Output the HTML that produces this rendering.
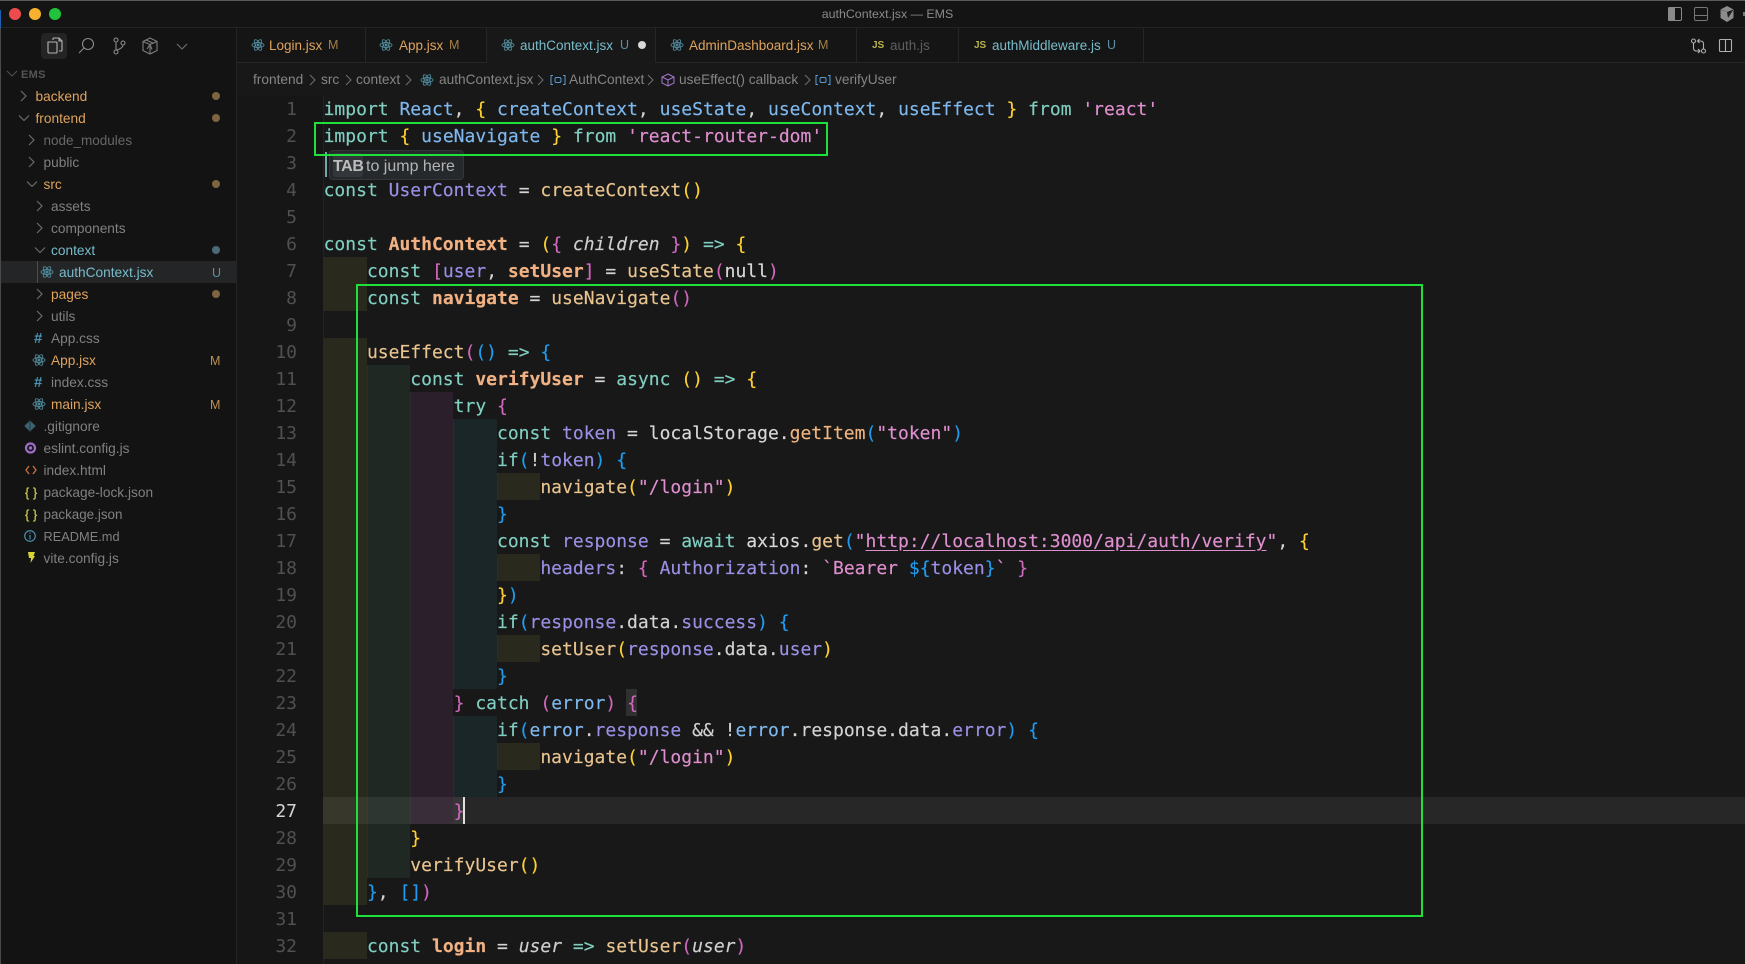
<!DOCTYPE html>
<html><head><meta charset="utf-8"><title>authContext.jsx — EMS</title>
<style>
*{box-sizing:border-box}
html,body{margin:0;padding:0;width:1745px;height:964px;overflow:hidden;background:#181818}
body{position:relative;font-family:"Liberation Sans",sans-serif;font-size:13.7px}
.a{position:absolute}
#title{left:0;top:0;width:1745px;height:28px;background:#141414;border-bottom:1px solid #242424;border-top:1px solid #5a5a5a}
#tt{left:0;width:1775px;top:6px;text-align:center;color:#8a8a8a;font-size:12.4px;line-height:17px}
.tl{width:12px;height:12px;border-radius:50%;top:8px}
#side{left:0;top:28px;width:237px;height:936px;background:#131313;border-right:1px solid #242424;border-left:1px solid #4a4a4a}
#tabs{left:237px;top:28px;width:1508px;height:35px;background:#151515;border-bottom:1px solid #262626}
.tab{position:absolute;top:0;height:34px;border-right:1px solid #262626;line-height:35px;white-space:nowrap;font-size:13.5px}
.tab svg,.tab b{position:absolute}
.tab span{position:absolute;top:0}
.or{color:#dfa35e}.te{color:#78bccb}.gr{color:#5e5e5e}
.bad{font-size:12.5px}
.row{position:absolute;left:1px;width:235px;height:22px;line-height:22px;color:#808080;white-space:nowrap}
.row span{position:absolute;top:1px}
.dot{position:absolute;left:211px;top:7px;width:8px;height:8px;border-radius:50%;background:#80633f}
.st{position:absolute;left:209px;font-size:12.5px;color:#c08f4f}
.chev{position:absolute;top:0}
#crumb{left:237px;top:63px;height:33px;width:1200px;color:#858585;line-height:33px;font-size:13.7px;white-space:nowrap}
#crumb span,#crumb svg{position:absolute}
#crumb span{top:0}
#gut{left:237px;top:63px;width:86px;height:901px;background:#161616}
.ln{position:absolute;left:237px;width:60px;height:27px;margin-top:1px;text-align:right;font:18px/27px "DejaVu Sans Mono",monospace;color:#505050}
.cd{position:absolute;left:323.6px;height:27px;margin-top:1px;white-space:pre;font:18px/27px "DejaVu Sans Mono",monospace;color:#d4d4d4;-webkit-text-stroke:.15px currentColor}
.ind{position:absolute;height:27px;width:43.34px}
.l1{background:#2a291d}.l2{background:#1f2822}.l3{background:#2a1f2a}.l4{background:#1b2628}
.k{color:#80cfc2}.b{color:#7fb8ee}.y{color:#ffd02f}.s{color:#df8fcf}.p{color:#9a90e6}.f{color:#e9c48f}.o{color:#f1b183;font-weight:bold}.m{color:#cf67bd}.u{color:#1f9cf0}.w{color:#d4d4d4}.i{font-style:italic;color:#cfcfcf}.g{color:#f0b57f}
.n{color:#d8d8d8}
.gbox{position:absolute;border:2.6px solid #1fe03a;background:transparent}
</style></head><body>

<div class="a" id="title"></div>
<div class="a" style="left:0;top:10px;width:1px;height:18px;background:#1a5fb4"></div>
<div class="a" id="tt">authContext.jsx — EMS</div>
<div class="a tl" style="left:9px;background:#ee4c4c"></div>
<div class="a tl" style="left:29px;background:#f6b22f"></div>
<div class="a tl" style="left:49px;background:#1fc43c"></div>

<svg class="a" style="left:1660px;top:0" width="85" height="28" viewBox="0 0 85 28">
<rect x="8.5" y="7.5" width="13" height="13" rx="1.5" fill="none" stroke="#8a8a8a"/><rect x="8" y="7" width="7" height="14" rx="1.5" fill="#8a8a8a"/>
<rect x="34.5" y="7.5" width="13" height="13" rx="1.5" fill="none" stroke="#777"/><line x1="34.5" y1="15.5" x2="47.5" y2="15.5" stroke="#777"/>
<path d="M67 6 L73.5 9.5 V18 L67 22 L60.5 18 V9.5 Z" fill="#8c8c8c"/><path d="M60.5 9.5 L67 12 L73.5 9.5 L68 18 Z" fill="#1c1c1c"/><path d="M67 12 L68 18 L67 21 L61 17.5 V10 Z" fill="#8c8c8c"/>
<rect x="83" y="12" width="2" height="4" fill="#777"/>
</svg>

<div class="a" id="side"></div>
<div class="a" style="left:41px;top:33px;width:26px;height:26px;border-radius:4px;background:#242424"></div>
<svg class="a" style="left:41px;top:33px" width="160" height="26" viewBox="0 0 160 26" fill="none" stroke="#9a9a9a" stroke-width="1.1">
<path d="M12 7 V6 q0-1 1-1 h5 l3 3 v9 q0 1-1 1 h-2" stroke="#b5b5b5"/><path d="M18 5 v3 h3" stroke="#b5b5b5"/><path d="M7 9 h8 q1 0 1 1 v9 q0 1-1 1 H8 q-1 0-1-1 Z" stroke="#b5b5b5"/>
<circle cx="47" cy="11" r="5.5" stroke="#8c8c8c"/><line x1="43" y1="15" x2="38" y2="20" stroke="#8c8c8c"/>
<circle cx="75" cy="7" r="2" stroke="#8c8c8c"/><circle cx="75" cy="19" r="2" stroke="#8c8c8c"/><circle cx="82" cy="10" r="2" stroke="#8c8c8c"/><path d="M75 9 V17 M82 12 q0 3-6 5" stroke="#8c8c8c"/>
<path d="M109 5 l7 3.5 v9 l-7 3.5 l-7-3.5 v-9 Z M102 8.5 l7 3 l7-3 M109 11.5 v9 M105 7 l7 3 M106 16 l3-4.500 l2 5" stroke="#7d7d7d"/>
<path d="M136 11 l5 5 l5-5" stroke="#707070"/>
</svg>
<svg class="a" style="left:5px;top:68px" width="14" height="12" fill="none" stroke="#4f4f4f" stroke-width="1.1"><path d="M2 3 l5 5 l5-5"/></svg>
<div class="a" style="left:21px;top:68px;font-size:11px;font-weight:bold;color:#555;line-height:14px;letter-spacing:.3px">EMS</div>

<div id="tree">
<div class="row" style="top:85px"><svg class="chev" style="left:17px" width="12" height="22" fill="none" stroke="#6f6f6f" stroke-width="1.1"><path d="M3 6 l5 5 l-5 5"/></svg><span class="or" style="left:34.500px">backend</span><i class="dot"></i></div>
<div class="row" style="top:107px"><svg class="chev" style="left:17px" width="12" height="22" fill="none" stroke="#6f6f6f" stroke-width="1.1"><path d="M1 8.500 l5 5 l5-5"/></svg><span class="or" style="left:34.500px">frontend</span><i class="dot"></i></div>
<div class="row" style="top:129px"><svg class="chev" style="left:25px" width="12" height="22" fill="none" stroke="#6f6f6f" stroke-width="1.1"><path d="M3 6 l5 5 l-5 5"/></svg><span style="left:42.500px;color:#666;font-size:13.5px">node_modules</span></div>
<div class="row" style="top:151px"><svg class="chev" style="left:25px" width="12" height="22" fill="none" stroke="#6f6f6f" stroke-width="1.1"><path d="M3 6 l5 5 l-5 5"/></svg><span style="left:42.500px">public</span></div>
<div class="row" style="top:173px"><svg class="chev" style="left:25px" width="12" height="22" fill="none" stroke="#6f6f6f" stroke-width="1.1"><path d="M1 8.500 l5 5 l5-5"/></svg><span class="or" style="left:42.500px">src</span><i class="dot"></i></div>
<div class="row" style="top:195px"><svg class="chev" style="left:33px" width="12" height="22" fill="none" stroke="#6f6f6f" stroke-width="1.1"><path d="M3 6 l5 5 l-5 5"/></svg><span style="left:50px">assets</span></div>
<div class="row" style="top:217px"><svg class="chev" style="left:33px" width="12" height="22" fill="none" stroke="#6f6f6f" stroke-width="1.1"><path d="M3 6 l5 5 l-5 5"/></svg><span style="left:50px">components</span></div>
<div class="row" style="top:239px"><svg class="chev" style="left:33px" width="12" height="22" fill="none" stroke="#6f6f6f" stroke-width="1.1"><path d="M1 8.500 l5 5 l5-5"/></svg><span class="te" style="left:50px">context</span><i class="dot" style="background:#4a6a78"></i></div>
<div class="row" style="top:261px;background:#242526"><div class="a" style="left:36px;top:0;width:1px;height:22px;background:#4d4d4d"></div><svg class="a" style="left:39px;top:4px" width="14" height="14" viewBox="0 0 14 14" fill="none" stroke="#4f8798" stroke-width=".9"><ellipse cx="7" cy="7" rx="6" ry="2.500"/><ellipse cx="7" cy="7" rx="6" ry="2.500" transform="rotate(60 7 7)"/><ellipse cx="7" cy="7" rx="6" ry="2.500" transform="rotate(120 7 7)"/><circle cx="7" cy="7" r="1" fill="#4f8798"/></svg><span class="te" style="left:58px">authContext.jsx</span><span class="st" style="left:211px;color:#5d8fa3">U</span></div>
<div class="row" style="top:283px"><svg class="chev" style="left:33px" width="12" height="22" fill="none" stroke="#6f6f6f" stroke-width="1.1"><path d="M3 6 l5 5 l-5 5"/></svg><span class="or" style="left:50px">pages</span><i class="dot"></i></div>
<div class="row" style="top:305px"><svg class="chev" style="left:33px" width="12" height="22" fill="none" stroke="#6f6f6f" stroke-width="1.1"><path d="M3 6 l5 5 l-5 5"/></svg><span style="left:50px">utils</span></div>
<div class="row" style="top:327px"><span style="left:33px;color:#4a93b5;font-weight:bold;font-size:15px">#</span><span style="left:50px">App.css</span></div>
<div class="row" style="top:349px"><svg class="a" style="left:31px;top:4px" width="14" height="14" viewBox="0 0 14 14" fill="none" stroke="#4f8798" stroke-width=".9"><ellipse cx="7" cy="7" rx="6" ry="2.500"/><ellipse cx="7" cy="7" rx="6" ry="2.500" transform="rotate(60 7 7)"/><ellipse cx="7" cy="7" rx="6" ry="2.500" transform="rotate(120 7 7)"/><circle cx="7" cy="7" r="1" fill="#4f8798"/></svg><span class="or" style="left:50px">App.jsx</span><span class="st">M</span></div>
<div class="row" style="top:371px"><span style="left:33px;color:#4a93b5;font-weight:bold;font-size:15px">#</span><span style="left:50px">index.css</span></div>
<div class="row" style="top:393px"><svg class="a" style="left:31px;top:4px" width="14" height="14" viewBox="0 0 14 14" fill="none" stroke="#4f8798" stroke-width=".9"><ellipse cx="7" cy="7" rx="6" ry="2.500"/><ellipse cx="7" cy="7" rx="6" ry="2.500" transform="rotate(60 7 7)"/><ellipse cx="7" cy="7" rx="6" ry="2.500" transform="rotate(120 7 7)"/><circle cx="7" cy="7" r="1" fill="#4f8798"/></svg><span class="or" style="left:50px">main.jsx</span><span class="st">M</span></div>
<div class="row" style="top:415px"><svg class="a" style="left:23px;top:5px" width="12" height="12" viewBox="0 0 12 12"><rect x="2" y="2" width="8" height="8" transform="rotate(45 6 6)" fill="#3d6272"/><path d="M6 1 V11" stroke="#1f3a47"/></svg><span style="left:42.500px">.gitignore</span></div>
<div class="row" style="top:437px"><svg class="a" style="left:23px;top:4px" width="13" height="14" viewBox="0 0 13 14" fill="none"><circle cx="6.500" cy="7" r="4.500" stroke="#9a6dc8" stroke-width="2.200"/><circle cx="6.500" cy="7" r="1.700" fill="#9a6dc8"/></svg><span style="left:42.500px">eslint.config.js</span></div>
<div class="row" style="top:459px"><svg class="a" style="left:24px;top:6px" width="12" height="10" fill="none" stroke="#c9703a" stroke-width="1.300"><path d="M4 1 L1 5 L4 9 M8 1 L11 5 L8 9"/></svg><span style="left:42.500px">index.html</span></div>
<div class="row" style="top:481px"><span style="left:24px;color:#c7c24e;font-size:12.5px;letter-spacing:.2px;-webkit-text-stroke:.3px #c7c24e">{ }</span><span style="left:42.500px">package-lock.json</span></div>
<div class="row" style="top:503px"><span style="left:24px;color:#c7c24e;font-size:12.5px;letter-spacing:.2px;-webkit-text-stroke:.3px #c7c24e">{ }</span><span style="left:42.500px;font-size:13.4px">package.json</span></div>
<div class="row" style="top:525px"><svg class="a" style="left:23px;top:5px" width="12" height="12" fill="none" stroke="#4c96b8" stroke-width="1.100"><circle cx="6" cy="6" r="5.300"/><path d="M6 5 V9.500 M6 2.500 V3.800"/></svg><span style="left:42.500px;font-size:12.8px">README.md</span></div>
<div class="row" style="top:547px"><svg class="a" style="left:26px;top:4px" width="9" height="13" viewBox="0 0 9 13"><path d="M1 1 H8 L6.500 5 H8 L3.500 12 L4 7 H2 Z" fill="#d9d336"/></svg><span style="left:42.500px">vite.config.js</span></div>
</div>

<div class="a" id="tabs">
<div class="tab" style="left:0;width:129px"><svg style="left:14px;top:10px" width="14" height="14" viewBox="0 0 14 14" fill="none" stroke="#4f8798" stroke-width=".9"><ellipse cx="7" cy="7" rx="6" ry="2.500"/><ellipse cx="7" cy="7" rx="6" ry="2.500" transform="rotate(60 7 7)"/><ellipse cx="7" cy="7" rx="6" ry="2.500" transform="rotate(120 7 7)"/><circle cx="7" cy="7" r="1" fill="#4f8798"/></svg><span class="or" style="left:32px">Login.jsx</span><span class="or bad" style="left:91px;color:#a67f47">M</span></div>
<div class="tab" style="left:129px;width:121px"><svg style="left:13px;top:10px" width="14" height="14" viewBox="0 0 14 14" fill="none" stroke="#4f8798" stroke-width=".9"><ellipse cx="7" cy="7" rx="6" ry="2.500"/><ellipse cx="7" cy="7" rx="6" ry="2.500" transform="rotate(60 7 7)"/><ellipse cx="7" cy="7" rx="6" ry="2.500" transform="rotate(120 7 7)"/><circle cx="7" cy="7" r="1" fill="#4f8798"/></svg><span class="or" style="left:33px">App.jsx</span><span class="or bad" style="left:83px;color:#a67f47">M</span></div>
<div class="tab" style="left:250px;width:169px;height:35px;background:#181818"><svg style="left:14px;top:10px" width="14" height="14" viewBox="0 0 14 14" fill="none" stroke="#4f8798" stroke-width=".9"><ellipse cx="7" cy="7" rx="6" ry="2.500"/><ellipse cx="7" cy="7" rx="6" ry="2.500" transform="rotate(60 7 7)"/><ellipse cx="7" cy="7" rx="6" ry="2.500" transform="rotate(120 7 7)"/><circle cx="7" cy="7" r="1" fill="#4f8798"/></svg><span class="te" style="left:33px">authContext.jsx</span><span class="bad" style="left:133px;color:#5d8fa3">U</span><b style="left:151px;top:13px;width:8px;height:8px;border-radius:50%;background:#d8d8d8"></b></div>
<div class="tab" style="left:419px;width:201px"><svg style="left:14px;top:10px" width="14" height="14" viewBox="0 0 14 14" fill="none" stroke="#4f8798" stroke-width=".9"><ellipse cx="7" cy="7" rx="6" ry="2.500"/><ellipse cx="7" cy="7" rx="6" ry="2.500" transform="rotate(60 7 7)"/><ellipse cx="7" cy="7" rx="6" ry="2.500" transform="rotate(120 7 7)"/><circle cx="7" cy="7" r="1" fill="#4f8798"/></svg><span class="or" style="left:33px">AdminDashboard.jsx</span><span class="or bad" style="left:162px;color:#a67f47">M</span></div>
<div class="tab" style="left:620px;width:102px"><span style="left:15px;color:#b9b34a;font-size:10px;font-weight:bold">JS</span><span class="gr" style="left:33px">auth.js</span></div>
<div class="tab" style="left:722px;width:185px"><span style="left:15px;color:#b9b34a;font-size:10px;font-weight:bold">JS</span><span class="te" style="left:33px">authMiddleware.js</span><span class="bad" style="left:148px;color:#5d8fa3">U</span></div>
</div>
<svg class="a" style="left:1688px;top:34px" width="50" height="24" fill="none" stroke="#b0b0b0" stroke-width="1.100">
<circle cx="5.500" cy="7" r="2"/><circle cx="15.500" cy="17" r="2"/><path d="M5.500 9 V14 q0 3 3 3 h3 M10 15 l2 2 l-2 2 M15.500 15 V10 q0-3-3-3 h-3 M11.500 5 l-2 2 l2 2"/>
<rect x="31.500" y="5.500" width="12" height="12" rx="1"/><line x1="37.500" y1="5.500" x2="37.500" y2="17.500"/>
</svg>

<div class="a" id="crumb">
<span style="left:16px">frontend</span>
<svg style="left:72px;top:11px" width="8" height="12" fill="none" stroke="#707070"><path d="M1 1 l5 5 l-5 5"/></svg>
<span style="left:84px">src</span>
<svg style="left:108px;top:11px" width="8" height="12" fill="none" stroke="#707070"><path d="M1 1 l5 5 l-5 5"/></svg>
<span style="left:119px">context</span>
<svg style="left:168px;top:11px" width="8" height="12" fill="none" stroke="#707070"><path d="M1 1 l5 5 l-5 5"/></svg>
<svg style="left:183px;top:10px" width="14" height="14" viewBox="0 0 14 14" fill="none" stroke="#4f8798" stroke-width=".9"><ellipse cx="7" cy="7" rx="6" ry="2.500"/><ellipse cx="7" cy="7" rx="6" ry="2.500" transform="rotate(60 7 7)"/><ellipse cx="7" cy="7" rx="6" ry="2.500" transform="rotate(120 7 7)"/><circle cx="7" cy="7" r="1" fill="#4f8798"/></svg>
<span style="left:202px">authContext.jsx</span>
<svg style="left:300px;top:11px" width="8" height="12" fill="none" stroke="#707070"><path d="M1 1 l5 5 l-5 5"/></svg>
<svg style="left:313px;top:11px" width="16" height="12" fill="none" stroke="#5a9bd6"><path d="M3 1.500 H1 V10.500 H3 M13 1.500 H15 V10.500 H13"/><rect x="5" y="3.500" width="6" height="5" rx="1.500"/></svg>
<span style="left:332px">AuthContext</span>
<svg style="left:410px;top:11px" width="8" height="12" fill="none" stroke="#707070"><path d="M1 1 l5 5 l-5 5"/></svg>
<svg style="left:424px;top:10px" width="14" height="14" fill="none" stroke="#a878d0" viewBox="0 0 14 14"><path d="M7 1 L13 4 V10 L7 13 L1 10 V4 Z M1 4 L7 7 L13 4 M7 7 V13"/></svg>
<span style="left:442px">useEffect() callback</span>
<svg style="left:567px;top:11px" width="8" height="12" fill="none" stroke="#707070"><path d="M1 1 l5 5 l-5 5"/></svg>
<svg style="left:578px;top:11px" width="16" height="12" fill="none" stroke="#5a9bd6"><path d="M3 1.500 H1 V10.500 H3 M13 1.500 H15 V10.500 H13"/><rect x="5" y="3.500" width="6" height="5" rx="1.500"/></svg>
<span style="left:598px">verifyUser</span>
</div>

<div class="a" id="gut" style="top:96px;height:868px"></div>
<div class="a" style="left:323px;top:95px;width:1px;height:869px;background:#232323"></div>

<div id="fills"><script>
var L={7:1,8:1,10:1,11:2,12:3,13:4,14:4,15:5,16:4,17:4,18:5,19:4,20:4,21:5,22:4,23:3,24:4,25:5,26:4,27:3,28:2,29:2,30:1,32:1};
var h='',c=['l1','l2','l3','l4','l1'];
for(var k in L){for(var j=0;j<L[k];j++){h+='<div class="ind '+c[j]+'" style="left:'+(323.4+j*43.34)+'px;top:'+(95+(k-1)*27)+'px'+(j>0?';border-left:1px solid #2c2c2c':'')+'"></div>';}}
document.write(h);
var n='';for(var i=1;i<=32;i++){n+='<div class="ln" style="top:'+(95+(i-1)*27)+'px'+(i==27?';color:#d4d4d4':'')+'">'+i+'</div>';}
document.write(n);
</script></div>

<div class="a" style="left:323px;top:797px;width:1422px;height:27px;background:rgba(255,255,255,.065)"></div>
<div class="a" style="left:453px;top:797px;width:11px;height:27px;background:rgba(255,255,255,.07)"></div>
<div class="a" style="left:626px;top:689px;width:11px;height:27px;background:#303030"></div>
<div class="a" style="left:463px;top:797px;width:2px;height:27px;background:#e0e0e0"></div>

<div class="cd" style="top:95px"><span class="k">import</span> <span class="b">React</span><span class="w">,</span> <span class="y">{</span> <span class="b">createContext</span><span class="w">,</span> <span class="b">useState</span><span class="w">,</span> <span class="b">useContext</span><span class="w">,</span> <span class="b">useEffect</span> <span class="y">}</span> <span class="k">from</span> <span class="s">'react'</span></div>
<div class="cd" style="top:122px"><span class="k">import</span> <span class="y">{</span> <span class="b">useNavigate</span> <span class="y">}</span> <span class="k">from</span> <span class="s">'react-router-dom'</span></div>
<div class="cd" style="top:176px"><span class="k">const</span> <span class="p">UserContext</span> <span class="w">=</span> <span class="f">createContext</span><span class="y">()</span></div>
<div class="cd" style="top:230px"><span class="k">const</span> <span class="o">AuthContext</span> <span class="w">=</span> <span class="y">(</span><span class="m">{</span> <span class="i">children</span> <span class="m">}</span><span class="y">)</span> <span class="k">=&gt;</span> <span class="y">{</span></div>
<div class="cd" style="top:257px">    <span class="k">const</span> <span class="m">[</span><span class="p">user</span><span class="w">,</span> <span class="o">setUser</span><span class="m">]</span> <span class="w">=</span> <span class="f">useState</span><span class="m">(</span><span class="n">null</span><span class="m">)</span></div>
<div class="cd" style="top:284px">    <span class="k">const</span> <span class="o">navigate</span> <span class="w">=</span> <span class="f">useNavigate</span><span class="m">()</span></div>
<div class="cd" style="top:338px">    <span class="f">useEffect</span><span class="m">(</span><span class="u">()</span> <span class="k">=&gt;</span> <span class="u">{</span></div>
<div class="cd" style="top:365px">        <span class="k">const</span> <span class="o">verifyUser</span> <span class="w">=</span> <span class="k">async</span> <span class="y">()</span> <span class="k">=&gt;</span> <span class="y">{</span></div>
<div class="cd" style="top:392px">            <span class="k">try</span> <span class="m">{</span></div>
<div class="cd" style="top:419px">                <span class="k">const</span> <span class="p">token</span> <span class="w">=</span> <span class="n">localStorage</span><span class="w">.</span><span class="g">getItem</span><span class="u">(</span><span class="s">"token"</span><span class="u">)</span></div>
<div class="cd" style="top:446px">                <span class="k">if</span><span class="u">(</span><span class="w">!</span><span class="p">token</span><span class="u">)</span> <span class="u">{</span></div>
<div class="cd" style="top:473px">                    <span class="f">navigate</span><span class="y">(</span><span class="s">"/login"</span><span class="y">)</span></div>
<div class="cd" style="top:500px">                <span class="u">}</span></div>
<div class="cd" style="top:527px">                <span class="k">const</span> <span class="p">response</span> <span class="w">=</span> <span class="k">await</span> <span class="n">axios</span><span class="w">.</span><span class="f">get</span><span class="u">(</span><span class="s">"<span style="text-decoration:underline;text-underline-offset:3px">http://localhost:3000/api/auth/verify</span>"</span><span class="w">,</span> <span class="y">{</span></div>
<div class="cd" style="top:554px">                    <span class="p">headers</span><span class="w">:</span> <span class="m">{</span> <span class="p">Authorization</span><span class="w">:</span> <span class="s">`Bearer </span><span class="u">${</span><span class="p">token</span><span class="u">}</span><span class="s">`</span> <span class="m">}</span></div>
<div class="cd" style="top:581px">                <span class="y">}</span><span class="u">)</span></div>
<div class="cd" style="top:608px">                <span class="k">if</span><span class="u">(</span><span class="p">response</span><span class="w">.data.</span><span class="p">success</span><span class="u">)</span> <span class="u">{</span></div>
<div class="cd" style="top:635px">                    <span class="f">setUser</span><span class="y">(</span><span class="p">response</span><span class="w">.data.</span><span class="p">user</span><span class="y">)</span></div>
<div class="cd" style="top:662px">                <span class="u">}</span></div>
<div class="cd" style="top:689px">            <span class="m">}</span> <span class="k">catch</span> <span class="m">(</span><span class="b">error</span><span class="m">)</span> <span class="m">{</span></div>
<div class="cd" style="top:716px">                <span class="k">if</span><span class="u">(</span><span class="b">error</span><span class="w">.</span><span class="p">response</span> <span class="w">&amp;&amp; !</span><span class="b">error</span><span class="w">.response.data.</span><span class="p">error</span><span class="u">)</span> <span class="u">{</span></div>
<div class="cd" style="top:743px">                    <span class="f">navigate</span><span class="y">(</span><span class="s">"/login"</span><span class="y">)</span></div>
<div class="cd" style="top:770px">                <span class="u">}</span></div>
<div class="cd" style="top:797px">            <span class="m">}</span></div>
<div class="cd" style="top:824px">        <span class="y">}</span></div>
<div class="cd" style="top:851px">        <span class="f">verifyUser</span><span class="y">()</span></div>
<div class="cd" style="top:878px">    <span class="u">}</span><span class="w">,</span> <span class="u">[]</span><span class="m">)</span></div>
<div class="cd" style="top:932px">    <span class="k">const</span> <span class="o">login</span> <span class="w">=</span> <span class="i">user</span> <span class="k">=&gt;</span> <span class="f">setUser</span><span class="m">(</span><span class="i">user</span><span class="m">)</span></div>

<div class="a" style="left:325px;top:152px;width:2px;height:25px;background:#6fa8ad"></div>
<div class="a" style="left:329px;top:150px;width:135px;height:30px;background:#26292c;border:1px solid #33373a;border-radius:4px"></div>
<div class="a" style="left:333px;top:153px;width:30px;height:24px;background:#33363a;border-radius:3px"></div>
<div class="a" style="left:333px;top:152px;height:30px;line-height:30px;font-size:16px;color:#bdbdbd;white-space:nowrap;letter-spacing:-.4px"><b>TAB</b></div>
<div class="a" style="left:366px;top:152px;height:30px;line-height:30px;font-size:16px;color:#b4b4b4;white-space:nowrap">to jump here</div>

<div class="gbox" style="left:314px;top:122px;width:514px;height:34px"></div>
<div class="gbox" style="left:356px;top:284px;width:1067px;height:633px"></div>
</body></html>
